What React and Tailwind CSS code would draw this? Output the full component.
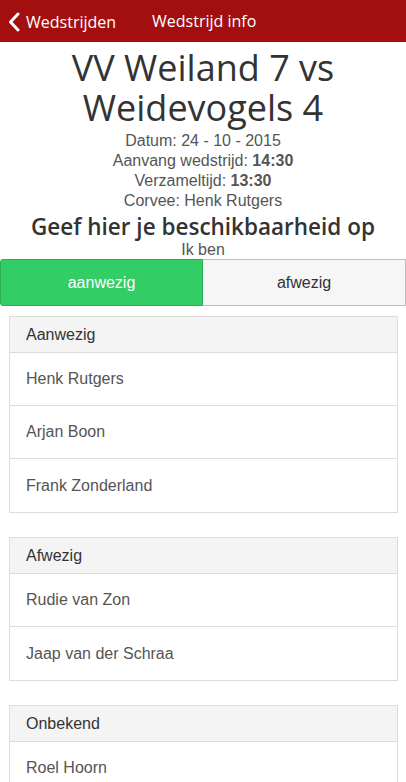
import React from "react";

const seg = { fontFamily: '"Open Sans", "Noto Sans", sans-serif' };

function Panel({ title, items }) {
  return (
    <div className="ml-[9px] mr-[8px] border border-[#dddddd] bg-white">
      <div className="h-[36px] bg-[#f4f4f4] border-b border-[#dddddd] flex items-center pl-[16px] text-[16px] text-[#333]">
        {title}
      </div>
      {items.map((n, i) => (
        <div
          key={n}
          className={`h-[53px] flex items-center pl-[16px] text-[16px] text-[#555] ${i < items.length - 1 ? "border-b border-[#dddddd]" : ""}`}
        >
          {n}
        </div>
      ))}
    </div>
  );
}

export default function App() {
  return (
    <div className="w-[406px] h-[782px] overflow-hidden bg-white" style={{ fontFamily: '"Liberation Sans", Arial, sans-serif' }}>
      <div className="h-[42px] bg-[#a30f0f] flex items-center text-white" style={seg}>
        <div className="flex items-center pl-[8px] w-[152px] mt-[1px]">
          <svg width="12" height="20" viewBox="0 0 12 20" className="mr-[6px]">
            <path d="M10 2 L2.5 10 L10 18" stroke="white" strokeWidth="3" fill="none" strokeLinecap="round" strokeLinejoin="round" />
          </svg>
          <span className="text-[16px]">Wedstrijden</span>
        </div>
        <span className="text-[16px] -mt-[1px]">Wedstrijd info</span>
      </div>
      <div className="text-center pt-[6px]">
        <h1 className="text-[36px] leading-[40px] text-[#333] font-normal" style={seg}>
          VV Weiland 7 vs
          <br />
          Weidevogels 4
        </h1>
        <div className="text-[16px] leading-[20px] text-[#555] mt-[3px]">
          <div>Datum: 24 - 10 - 2015</div>
          <div>
            Aanvang wedstrijd: <b>14:30</b>
          </div>
          <div>
            Verzameltijd: <b>13:30</b>
          </div>
          <div>Corvee: Henk Rutgers</div>
        </div>
        <div className="text-[22.5px] leading-[28px] font-semibold text-[#333] mt-[2px]" style={seg}>
          Geef hier je beschikbaarheid op
        </div>
        <div className="text-[16px] leading-[18px] text-[#555]">Ik ben</div>
      </div>
      <div className="flex h-[47px]">
        <div className="w-[203px] bg-[#32cd65] border border-[#29b057] rounded-l-[3px] text-white flex items-center justify-center text-[16px]">
          aanwezig
        </div>
        <div className="flex-1 bg-[#f6f6f6] border border-l-0 border-[#bdbdbd] text-[#333] flex items-center justify-center text-[16px]">
          afwezig
        </div>
      </div>
      <div className="mt-[10px] flex flex-col gap-[24px]">
        <Panel title="Aanwezig" items={["Henk Rutgers", "Arjan Boon", "Frank Zonderland"]} />
        <Panel title="Afwezig" items={["Rudie van Zon", "Jaap van der Schraa"]} />
        <Panel title="Onbekend" items={["Roel Hoorn", "Piet Jansen"]} />
      </div>
    </div>
  );
}
